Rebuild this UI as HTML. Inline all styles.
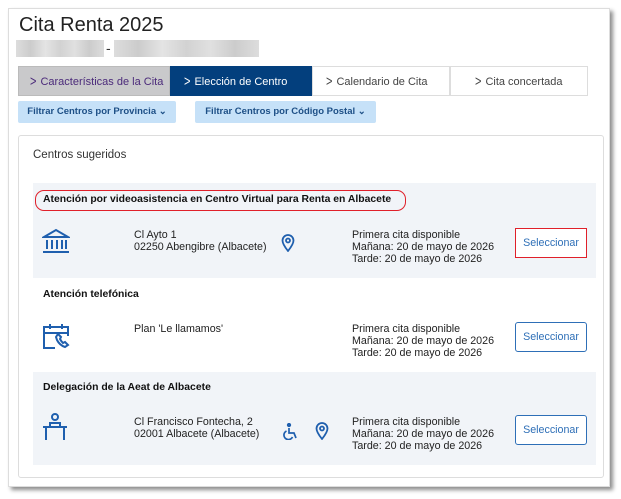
<!DOCTYPE html>
<html><head><meta charset="utf-8"><style>
*{box-sizing:border-box;margin:0;padding:0}
body{width:621px;height:499px;background:#fff;font-family:"Liberation Sans",Arial,sans-serif;position:relative;overflow:hidden}
.card{position:absolute;left:8px;top:8px;width:602px;height:479px;background:#fff;border:1px solid #ddd;box-shadow:3px 3px 4px rgba(0,0,0,.45)}
.a{position:absolute}
h1{position:absolute;left:19px;top:14px;font-size:20px;font-weight:normal;color:#222}
.blur{position:absolute;height:17px;background:linear-gradient(90deg,#ddd,#ccc,#e4e4e4,#d2d2d2,#e0e0e0,#ccc,#ddd)}
.tab{position:absolute;top:66px;height:30px;font-size:11px;line-height:30px;padding-left:13px;border:1px solid #ddd;white-space:nowrap;overflow:hidden}
.tab b{font-weight:normal;display:inline-block;transform:scaleY(1.3);margin-right:4px}
.flt{position:absolute;top:101px;height:22px;background:#c6e1f8;color:#1d4f86;font-size:9.5px;font-weight:bold;line-height:22px;text-align:center;border-radius:2px}
.inner{position:absolute;left:18px;top:135px;width:586px;height:343px;border:1px solid #ddd;border-radius:3px}
.row{position:absolute;left:33px;width:563px}
.ttl{position:absolute;left:10px;font-size:10.4px;font-weight:bold;color:#111}
.t{position:absolute;font-size:10.7px;color:#222;line-height:12px}
.btn{position:absolute;left:482px;width:72px;height:30px;border:1px solid #2e6fb7;border-radius:3px;color:#2e6fb7;font-size:10.7px;line-height:28px;text-align:center;background:#fff}
</style></head><body>
<div class="card"></div>
<h1>Cita Renta 2025</h1>
<div class="blur" style="left:16px;top:40px;width:88px"></div>
<div class="a" style="left:106px;top:40px;font-size:14px;color:#333">-</div>
<div class="blur" style="left:114px;top:40px;width:145px"></div>
<div class="tab" style="left:18px;width:152px;background:#c9c9cb;color:#4b2a7a;border-color:#bbb;padding-left:11px"><b>&gt;</b>Características de la Cita</div>
<div class="tab" style="left:170px;width:142px;background:#033f7d;color:#fff;border-color:#033f7d"><b>&gt;</b>Elección de Centro</div>
<div class="tab" style="left:312px;width:138px;background:#fff;color:#444"><b>&gt;</b>Calendario de Cita</div>
<div class="tab" style="left:450px;width:138px;background:#fff;color:#444;padding-left:24px"><b>&gt;</b>Cita concertada</div>
<div class="flt" style="left:18px;width:158px">Filtrar Centros por Provincia ⌄</div>
<div class="flt" style="left:195px;width:181px">Filtrar Centros por Código Postal ⌄</div>
<div class="inner"></div>
<div class="a" style="left:33px;top:149px;font-size:11.5px;color:#333">Centros sugeridos</div>

<div class="row" style="top:183px;height:95px;background:#f1f4f8">
 <div class="a" style="left:2px;top:7px;width:371px;height:21px;border:1.5px solid #e0202a;border-radius:9px"></div>
 <div class="ttl" style="top:11px">Atención por videoasistencia en Centro Virtual para Renta en Albacete</div>
 <svg class="a" style="left:9px;top:45px" width="28" height="26" viewBox="0 0 28 26" fill="none" stroke="#1f5fae" stroke-width="2"><path d="M2 9 L14 2 L26 9 Z"/><path d="M5 12v9M10 12v9M15 12v9M20 12v9M24 12v9M1 24h26"/></svg>
 <div class="t" style="left:101px;top:46px">Cl Ayto 1<br>02250 Abengibre (Albacete)</div>
 <svg class="a" style="left:248px;top:51px" width="14" height="18" viewBox="0 0 14 18" fill="none" stroke="#1f5fae" stroke-width="1.8"><path d="M7 17C3 12 1.5 9 1.5 6.5a5.5 5.5 0 0 1 11 0C12.5 9 11 12 7 17Z"/><circle cx="7" cy="6.5" r="2"/></svg>
 <div class="t" style="left:319px;top:46px">Primera cita disponible<br>Mañana: 20 de mayo de 2026<br>Tarde: 20 de mayo de 2026</div>
 <div class="btn" style="top:45px;border:1.5px solid #e0202a;border-radius:0">Seleccionar</div>
</div>

<div class="row" style="top:278px;height:92px;background:#fff">
 <div class="ttl" style="top:11px">Atención telefónica</div>
 <svg class="a" style="left:9px;top:44px" width="28" height="28" viewBox="0 0 28 28" fill="none" stroke="#1f5fae" stroke-width="2"><path d="M13 26H2V5h24v9M2 11h24M8 2v5M20 2v5"/><path d="M15 18c2 4 5 6 8 7l3-2-3-3-2 1c-1-1-2-2-3-4l1-2-3-3-2 3z"/></svg>
 <div class="t" style="left:101px;top:45px">Plan 'Le llamamos'</div>
 <div class="t" style="left:319px;top:45px">Primera cita disponible<br>Mañana: 20 de mayo de 2026<br>Tarde: 20 de mayo de 2026</div>
 <div class="btn" style="top:44px">Seleccionar</div>
</div>

<div class="row" style="top:372px;height:93px;background:#f1f4f8">
 <div class="ttl" style="top:10px">Delegación de la Aeat de Albacete</div>
 <svg class="a" style="left:9px;top:41px" width="26" height="28" viewBox="0 0 26 28" fill="none" stroke="#1f5fae" stroke-width="2"><circle cx="13" cy="4" r="3"/><path d="M8 13v-3h10v3M1 14h24M4 14v13M22 14v13"/></svg>
 <div class="t" style="left:101px;top:44px">Cl Francisco Fontecha, 2<br>02001 Albacete (Albacete)</div>
 <svg class="a" style="left:249px;top:51px" width="16" height="17" viewBox="0 0 16 17" fill="none" stroke="#1f5fae" stroke-width="1.7"><circle cx="7" cy="2" r="1.3" fill="#1f5fae"/><path d="M7 5v5h5l2 5"/><path d="M4.5 8a4.5 4.5 0 1 0 6 6"/></svg>
 <svg class="a" style="left:282px;top:50px" width="14" height="18" viewBox="0 0 14 18" fill="none" stroke="#1f5fae" stroke-width="1.8"><path d="M7 17C3 12 1.5 9 1.5 6.5a5.5 5.5 0 0 1 11 0C12.5 9 11 12 7 17Z"/><circle cx="7" cy="6.5" r="2"/></svg>
 <div class="t" style="left:319px;top:44px">Primera cita disponible<br>Mañana: 20 de mayo de 2026<br>Tarde: 20 de mayo de 2026</div>
 <div class="btn" style="top:43px">Seleccionar</div>
</div>
</body></html>
